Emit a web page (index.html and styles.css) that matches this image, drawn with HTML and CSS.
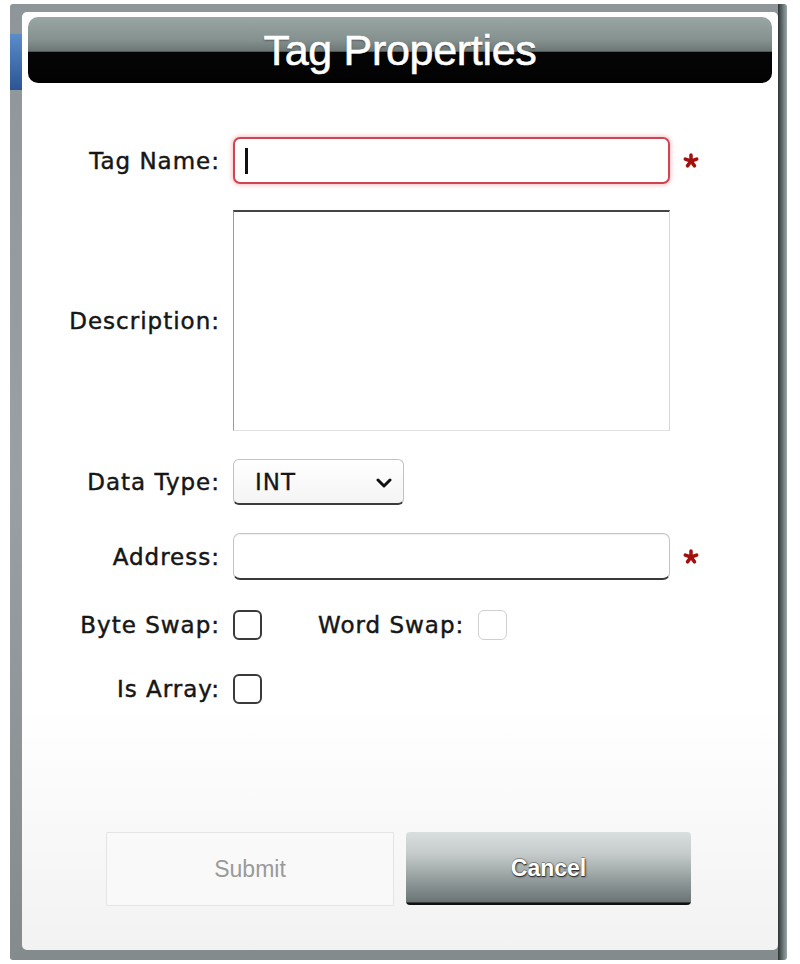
FILE: index.html
```html
<!DOCTYPE html>
<html>
<head>
<meta charset="utf-8">
<title>Tag Properties</title>
<link rel="stylesheet" href="styles.css">
</head>
<body>
<div class="frame">
  <div class="dialog">
    <div class="titlebar"><h1 class="title">Tag Properties</h1></div>
    <form class="form">
      <div class="row row-name">
        <label class="label">Tag Name:</label>
        <div class="field input input-focus"><span class="caret"></span></div>
        <svg class="req" viewBox="0 0 20 20" width="16" height="16"><g stroke="#a3110f" stroke-width="4.4" stroke-linecap="round"><line x1="10" y1="10" x2="10" y2="2.5"/><line x1="10" y1="10" x2="17.1" y2="7.7"/><line x1="10" y1="10" x2="14.4" y2="16.1"/><line x1="10" y1="10" x2="5.6" y2="16.1"/><line x1="10" y1="10" x2="2.9" y2="7.7"/></g></svg>
      </div>
      <div class="row row-desc">
        <label class="label">Description:</label>
        <div class="field textarea"></div>
      </div>
      <div class="row row-type">
        <label class="label">Data Type:</label>
        <div class="select"><span class="select-value">INT</span><svg class="chev" viewBox="0 0 16 10" width="16" height="10"><polyline points="2,2 8,8 14,2" fill="none" stroke="#111" stroke-width="3" stroke-linecap="round" stroke-linejoin="round"/></svg></div>
      </div>
      <div class="row row-addr">
        <label class="label">Address:</label>
        <div class="field input input-plain"></div>
        <svg class="req" viewBox="0 0 20 20" width="16" height="16"><g stroke="#a3110f" stroke-width="4.4" stroke-linecap="round"><line x1="10" y1="10" x2="10" y2="2.5"/><line x1="10" y1="10" x2="17.1" y2="7.7"/><line x1="10" y1="10" x2="14.4" y2="16.1"/><line x1="10" y1="10" x2="5.6" y2="16.1"/><line x1="10" y1="10" x2="2.9" y2="7.7"/></g></svg>
      </div>
      <div class="row row-swap">
        <label class="label">Byte Swap:</label>
        <span class="check"></span>
        <label class="label-inline">Word Swap:</label>
        <span class="check check-light"></span>
      </div>
      <div class="row row-array">
        <label class="label">Is Array:</label>
        <span class="check"></span>
      </div>
    </form>
    <div class="actions">
      <button class="btn btn-submit" type="button">Submit</button>
      <button class="btn btn-cancel" type="button">Cancel</button>
    </div>
  </div>
</div>
</body>
</html>
```

FILE: styles.css
```css
html, body {
  margin: 0;
  padding: 0;
  background: #ffffff;
}

.frame {
  box-sizing: border-box;
  margin: 4px 0 0 10px;
  width: 777px;
  height: 956px;
  padding: 8px 9px 10px 12px;
  border-radius: 3px;
  background:
    linear-gradient(#5b8cc9, #2c5596) no-repeat 0 30px / 12px 56px,
    linear-gradient(to right, #2e3434, #6f7c7c 60%, #9aa6a6) no-repeat right top / 9px 100%,
    linear-gradient(to bottom, #8e969a, #99a1a5 50%, #838b8c);
}

.dialog {
  box-sizing: border-box;
  height: 938px;
  border-radius: 5px;
  background: linear-gradient(to bottom, #ffffff 0%, #ffffff 74%, #f2f2f2 100%);
  font-family: "DejaVu Sans", "Liberation Sans", sans-serif;
  color: #161616;
  overflow: hidden;
}

.titlebar {
  margin: 5px 6px 0;
  height: 66px;
  border-radius: 10px;
  background: linear-gradient(to bottom, #9aa6a4 0%, #85918f 35%, #6c7775 52%, #050505 53%, #020202 100%);
  display: flex;
  align-items: center;
  justify-content: center;
}

.title {
  margin: 0;
  font-family: "Liberation Sans", Arial, sans-serif;
  font-weight: normal;
  font-size: 43px;
  line-height: 1;
  color: #ffffff;
  letter-spacing: -0.3px;
  -webkit-text-stroke: 0.6px #ffffff;
  text-shadow: 0 1px 2px rgba(0, 0, 0, 0.6);
  padding-top: 1px;
}

.form {
  padding-top: 54px;
}

.row {
  display: flex;
  align-items: center;
}

.label {
  width: 198px;
  flex: none;
  text-align: right;
  font-size: 23px;
  letter-spacing: 1px;
  -webkit-text-stroke: 0.45px #161616;
  margin-right: 13px;
  white-space: nowrap;
}

.label-inline {
  font-size: 23px;
  letter-spacing: 1px;
  -webkit-text-stroke: 0.45px #161616;
  margin-left: 56px;
  margin-right: 14px;
  white-space: nowrap;
}

.field {
  box-sizing: border-box;
  width: 437px;
  flex: none;
  background: #ffffff;
}

.input {
  height: 47px;
  border-radius: 7px;
}

.input-focus {
  border: 2px solid #cf4452;
  box-shadow: 0 0 4px 1px rgba(230, 110, 120, 0.45);
  display: flex;
  align-items: center;
  padding-left: 10px;
}

.caret {
  display: block;
  width: 3px;
  height: 26px;
  background: #111111;
}

.input-plain {
  border: 1px solid #c4c4c4;
  border-bottom: 2px solid #3a3a3a;
  box-shadow: inset 0 1px 1px rgba(0, 0, 0, 0.06);
}

.req {
  margin-left: 13px;
  flex: none;
}

.row-desc {
  margin-top: 26px;
}

.textarea {
  height: 221px;
  border-top: 2px solid #444444;
  border-left: 1px solid #9a9a9a;
  border-right: 1px solid #d6d6d6;
  border-bottom: 1px solid #e2e2e2;
}

.row-type {
  margin-top: 28px;
}

.select {
  box-sizing: border-box;
  width: 171px;
  height: 46px;
  border: 1px solid #c2c2c2;
  border-bottom: 2px solid #3c3c3c;
  border-radius: 6px;
  background: linear-gradient(to bottom, #ffffff, #f4f4f4);
  display: flex;
  align-items: center;
  justify-content: space-between;
  padding: 0 11px 0 21px;
}

.select-value {
  font-size: 23px;
  letter-spacing: 1px;
  -webkit-text-stroke: 0.3px #161616;
}

.chev {
  margin-top: 2px;
}

.row-addr {
  margin-top: 28px;
}

.row-swap {
  margin-top: 30px;
}

.check {
  box-sizing: border-box;
  display: block;
  flex: none;
  width: 29px;
  height: 30px;
  border: 2px solid #3a3a3a;
  border-radius: 6px;
  background: #ffffff;
}

.check-light {
  border: 1px solid #cfcfcf;
}

.row-array {
  margin-top: 34px;
}

.actions {
  display: flex;
  align-items: flex-start;
  gap: 12px;
  margin-top: 128px;
  padding-left: 84px;
}

.btn {
  font-family: "Liberation Sans", Arial, sans-serif;
  font-size: 23px;
  cursor: pointer;
  padding: 0;
}

.btn-submit {
  width: 288px;
  height: 74px;
  background: #f9f9f9;
  border: 1px solid #e4e4e4;
  color: #9a9a9a;
  border-radius: 1px;
}

.btn-cancel {
  width: 285px;
  height: 73px;
  border: none;
  border-radius: 4px;
  background: linear-gradient(to bottom, #d9dede 0%, #c5cbcb 30%, #8d9696 70%, #6b7474 96%, #111111 97%, #111111 100%);
  color: #ffffff;
  font-weight: bold;
  text-shadow: 0 1px 0 #333, 0 -1px 0 rgba(0,0,0,0.3), 1px 1px 2px rgba(0, 0, 0, 0.7);
}
```
